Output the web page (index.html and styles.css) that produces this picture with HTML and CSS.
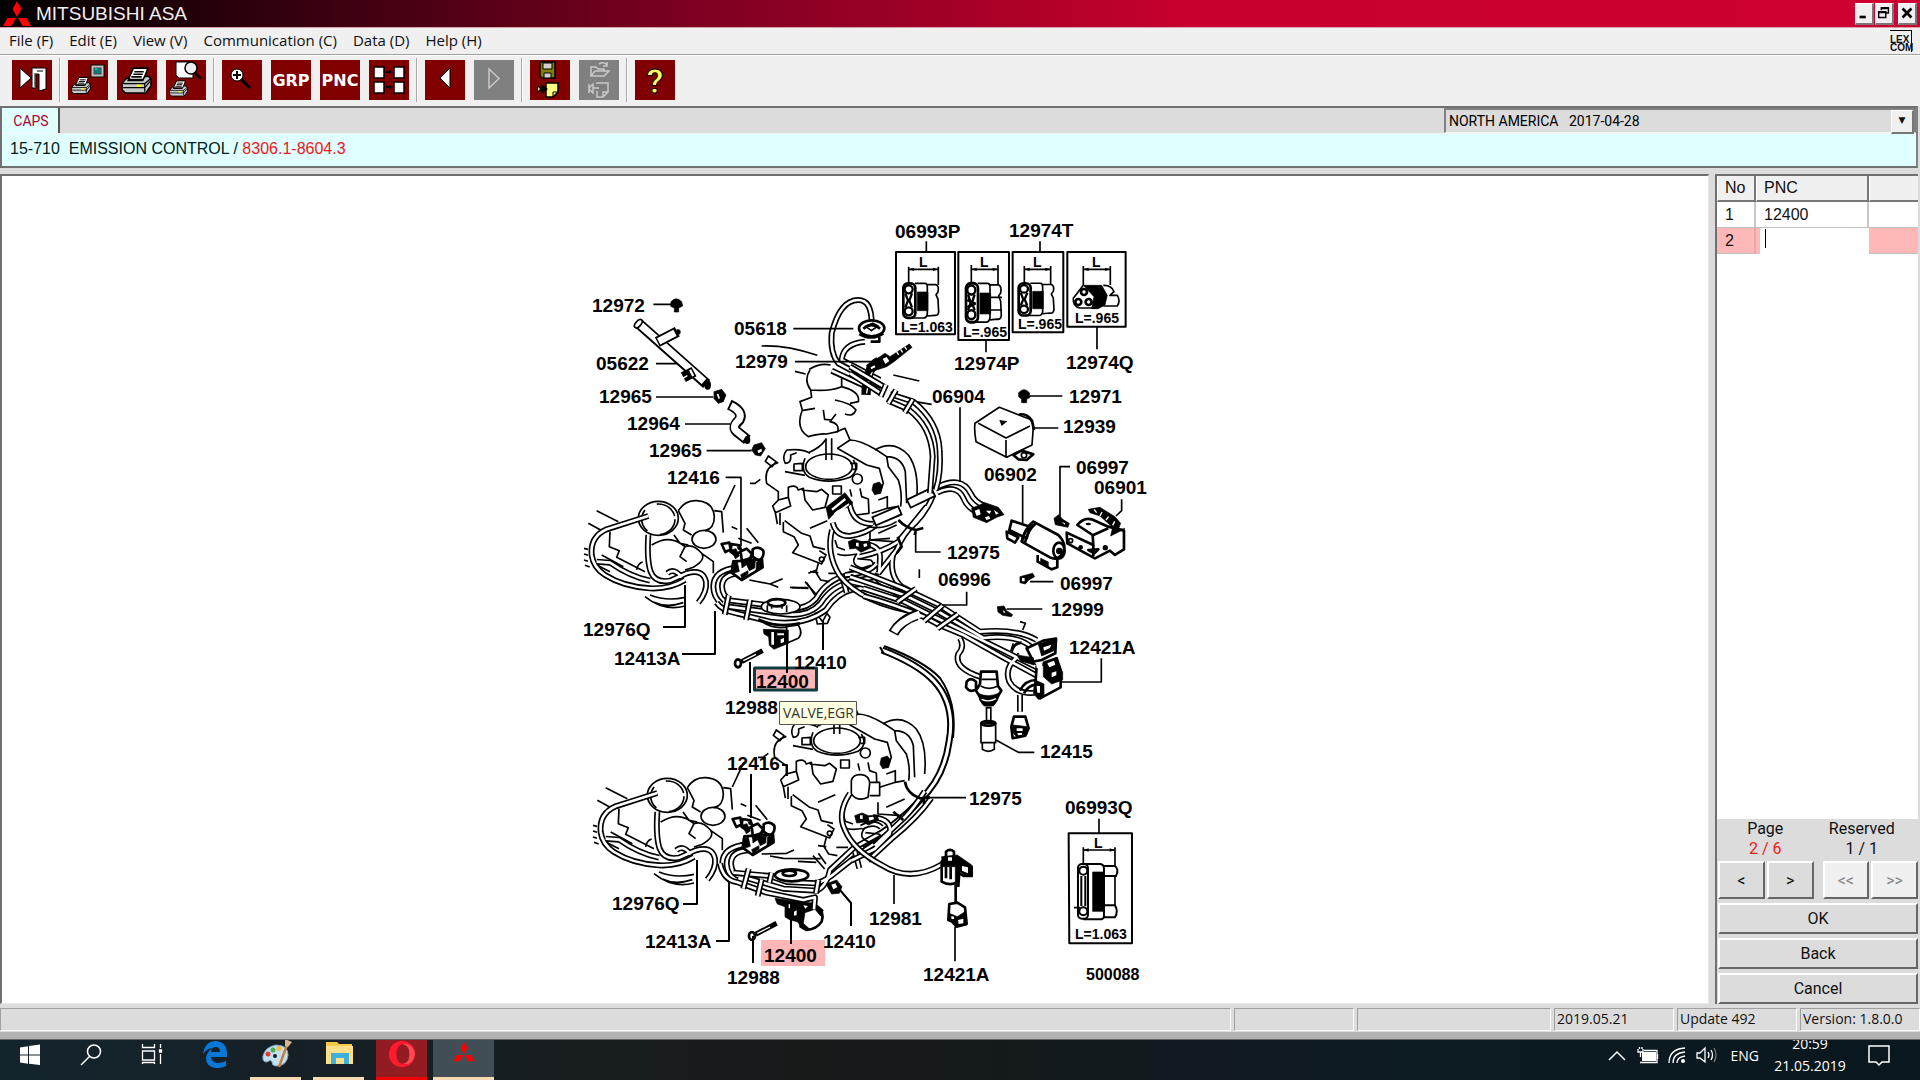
FILE: index.html
```html
<!DOCTYPE html>
<html lang="en">
<head>
  <meta charset="UTF-8">
  <meta name="viewport" content="width=device-width, initial-scale=1.0">
  <title>MITSUBISHI ASA</title>
  <link rel="stylesheet" href="styles.css">
</head>
<body>
  <svg class="sprites" width="0" height="0" aria-hidden="true">
    <symbol id="diamonds" viewBox="0 0 28 26">
      <path fill="#f00" d="M14 0 L18.500 8 L14 16 L9.500 8 Z M13 17 L8.500 25 H0 L4.500 17 Z M15 17 L19.500 25 H28 L23.500 17 Z"/>
    </symbol>
    <symbol id="printer" viewBox="0 0 30 26">
      <path fill="#fff" stroke="#000" stroke-width="1.500" d="M12 1 H26 L22 12 H7 Z"/>
      <path stroke="#000" stroke-width="1.500" d="M13 4.500 H22 M12 7 H21 M10 9.500 H20"/>
      <path fill="#c8c8c8" stroke="#000" stroke-width="1.500" d="M5 11 H8 L7 13 H21 L23 9 H27 L29 12 V18 L24 25 H4 L1 22 V16 Z"/>
      <path stroke="#000" stroke-width="1.200" fill="none" d="M1 16 H23 L29 11 M2 20 H23 L28 14 M23 16 V24"/>
      <path stroke="#ff0" stroke-width="2" d="M15 18 H20"/>
    </symbol>
  </svg>

  <header class="titlebar">
    <svg class="title-logo"><use href="#diamonds"/></svg>
    <h1>MITSUBISHI ASA</h1>
    <div class="window-buttons">
      <button aria-label="Minimize"><svg viewBox="0 0 18 18"><path d="M4 13.500 H11" stroke="#000" stroke-width="3"/></svg></button>
      <button aria-label="Restore"><svg viewBox="0 0 18 18"><path d="M6 6 V3 H14 V9 H11 M3 7.500 H11 V14 H3 Z M3 8.500 H11 M6 4 H14" fill="none" stroke="#000" stroke-width="1.600"/></svg></button>
      <button class="close" aria-label="Close"><svg viewBox="0 0 18 18"><path d="M4 4 L14 14 M14 4 L4 14" stroke="#000" stroke-width="3"/></svg></button>
    </div>
  </header>

  <nav class="menubar">
    <button>File (F)</button>
    <button>Edit (E)</button>
    <button>View (V)</button>
    <button>Communication (C)</button>
    <button>Data (D)</button>
    <button>Help (H)</button>
    <div class="lexcom">LEX<br>COM</div>
  </nav>

  <div class="toolbar">
    <button aria-label="Exit"><svg viewBox="0 0 40 40">
      <path d="M8 8 L19 18 L8 28 Z M20 8 H34 V29 L27 31 V14 H24 V28 H20 Z" fill="#fff" stroke="#000"/>
      <path d="M23 13 V27 M25 11 H31" stroke="#000"/></svg></button>
    <span class="sep"></span>
    <button aria-label="Print screen"><svg viewBox="0 0 40 40">
      <rect x="23" y="5" width="13" height="12" fill="#c0c0c0" stroke="#000"/><rect x="26" y="8" width="7" height="6" fill="#008080" stroke="#444"/><path d="M27 9 h2" stroke="#0ff"/>
      <use href="#printer" x="3" y="14" width="20" height="23"/></svg></button>
    <button aria-label="Print"><svg viewBox="0 0 40 40"><use href="#printer" x="4" y="6" width="31" height="29"/></svg></button>
    <button aria-label="Print preview"><svg viewBox="0 0 40 40">
      <path d="M10 2 H27 V18 H13 L10 15 Z" fill="#fff" stroke="#000"/>
      <circle cx="25" cy="8" r="6" fill="#eee" stroke="#000" stroke-width="1.500"/><path d="M29 13 L35 19" stroke="#000" stroke-width="2.500"/>
      <use href="#printer" x="3" y="19" width="19" height="19"/></svg></button>
    <span class="sep"></span>
    <button aria-label="Zoom in"><svg viewBox="0 0 40 40">
      <path d="M19 19 L28 28" stroke="#000" stroke-width="3"/><circle cx="15" cy="15" r="6" fill="#fff" stroke="#000"/><path d="M11 15 H19 M15 11 V19" stroke="#000" stroke-width="2"/></svg></button>
    <button class="word">GRP</button>
    <button class="word">PNC</button>
    <button aria-label="Illustration links"><svg viewBox="0 0 40 40">
      <path d="M5 7 H15 V18 H5 Z M25 7 H35 V18 H25 Z M5 22 H15 V33 H5 Z M25 22 H35 V33 H25 Z" fill="#fff" stroke="#000" stroke-width="1.500"/>
      <path d="M17 12 H22 M17 27 H22" stroke="#000" stroke-width="2"/><path d="M20 9 L23 12 L20 15 Z M20 24 L23 27 L20 30 Z"/></svg></button>
    <span class="sep"></span>
    <button aria-label="Previous"><svg viewBox="0 0 40 40"><path d="M25 8 V28 L15 18 Z" fill="#fff" stroke="#000"/></svg></button>
    <button aria-label="Next" disabled><svg viewBox="0 0 40 40"><path d="M15 9 V28 L25 18.500 Z" fill="none" stroke="#c8c8c8" stroke-width="1.500"/></svg></button>
    <span class="sep"></span>
    <button aria-label="Save and send"><svg viewBox="0 0 40 40">
      <path d="M10 2 H25 V18 H12 L10 16 Z" fill="#808000" stroke="#000" stroke-width="1.500"/><path d="M13 3 H22 V9 H13 Z M14 13 H21 V18 H14 Z" fill="#d0d0d0" stroke="#000"/>
      <path d="M16 23 H28 V32 L23 37 H16 Z" fill="#ffff80" stroke="#000" stroke-width="1.500"/><path d="M28 32 H23 V37" fill="none" stroke="#000"/>
      <path d="M7 24 L11 28 V24 L18 29 L11 34 V30 L7 34 Z" fill="#000"/><path d="M8 27 L10 29 L8 31 Z" fill="#ffff80"/></svg></button>
    <button aria-label="Open and send" disabled><svg viewBox="0 0 40 40" fill="none" stroke="#c8c8c8" stroke-width="1.500">
      <path d="M12 16 V7 H17 L19 9 H25 V11 M12 16 L16 11 H30 L25 16 Z M20 4 Q25 1 28 5 M28 2 V6 H24"/>
      <path d="M17 23 H29 V32 L24 37 H18 V31 M29 32 H24 V37 M10 24 V33 M10 28 L14 24 V33 L10 29 M14 28 H20"/></svg></button>
    <span class="sep"></span>
    <button aria-label="Help"><svg viewBox="0 0 40 40"><text x="20" y="33" class="help-mark">?</text></svg></button>
  </div>

  <section class="context">
    <div class="tabstrip">
      <button class="tab">CAPS</button>
      <div class="region">
        <select aria-label="Region"><option>NORTH AMERICA &nbsp; 2017-04-28</option></select>
      </div>
    </div>
    <p class="path">15-710 &nbsp;EMISSION CONTROL / <span class="red">8306.1-8604.3</span></p>
  </section>

  <main class="workspace">
    <div class="illustration">
      <svg class="drawing" viewBox="545 190 620 800" role="img" aria-label="Emission control parts">
        <defs>
          <!-- vacuum reservoir and valve side, shared by both assemblies -->
          <g id="bank-lines">
            <path d="M80 92 L145 125 M55 130 L92 150 M120 155 L118 200 L148 212 L140 232 L225 275 M245 195 Q300 160 345 200 L330 230 L350 245 M345 200 Q370 190 395 220 Q408 240 370 262 L345 270 M312 165 L330 190 L355 195 M395 220 L430 245 L430 280 M200 270 Q203 250 218 246"/>
            <path d="M325 92 Q345 60 380 62 Q430 65 433 110 Q433 145 405 152 M325 92 L345 130 L340 150 L365 165 M433 92 L455 95 L460 158 M460 90 L495 15 M485 140 L502 148 M530 145 L565 188 M505 175 L545 190"/>
            <path d="M42 205 l12 3 M42 222 l12 4 M42 240 l12 4 M45 256 l14 5 M225 350 Q280 395 345 378 M240 345 Q290 365 345 352 M250 366 Q290 385 340 368 M95 225 L160 260 M70 250 L120 275"/>
            <ellipse cx="265" cy="115" rx="60" ry="51"/>
            <ellipse cx="265" cy="118" rx="50" ry="46" stroke-dasharray="70 40"/>
            <ellipse cx="402" cy="178" rx="36" ry="27"/>
          </g>
          <g id="bank-hoses">
            <path d="M235 108 L110 148 Q60 170 65 225 Q70 262 105 285 Q160 320 240 325 Q300 328 345 300"/>
            <path d="M235 165 Q230 240 242 275 Q255 310 300 302 L350 280 Q400 265 408 305 Q412 335 385 368"/>
            <path d="M80 245 L120 248 Q180 290 240 302 M292 280 Q312 262 335 292"/>
            <path d="M505 262 Q430 270 430 320 Q430 350 455 372 M515 280 Q456 280 456 320 Q458 350 480 358"/>
          </g>
          <g id="switch-valve">
            <path class="line white thick" d="M455 192 L478 188 L482 208 L466 216 Z M484 192 L508 196 L514 212 L498 226 L482 216 Z M512 214 L530 206 L546 222 L538 240 L516 246 Z M548 208 Q566 196 580 212 Q584 232 566 242 L548 230 Z M490 244 L576 238 L578 262 L515 300 L485 278 Z"/>
            <path class="solid" d="M484 210 l14 -4 l10 22 l-12 8 Z M514 240 l26 -8 l16 12 l-2 20 l-16 8 l-8 -18 l-14 10 Z M486 250 l16 -4 l6 28 l-18 6 Z M560 246 l16 -4 l0 20 l-18 8 Z M512 284 l22 -12 l0 10 l-18 14 Z M502 200 l10 2 l2 8 l-10 -2 Z"/>
          </g>
          <!-- carburettor body -->
          <g id="engine">
            <ellipse cx="237" cy="200" rx="70" ry="38"/>
            <path d="M165 175 Q150 215 178 232 Q235 255 300 232 Q330 212 310 180 M300 190 h20 v18 h-12 M228 115 V180 M245 115 V180"/>
            <path d="M260 95 L285 85 L300 120 L262 145 M228 118 Q210 145 175 158 M110 150 Q95 170 106 190 Q125 190 122 165 L140 158 M110 150 Q160 145 180 160 M132 192 v20 h25 v-22 Z M105 215 L165 226"/>
            <path d="M55 168 L78 185 L66 200 L46 184 Z M85 187 Q40 200 50 250 L85 275 V300 M0 250 l15 0 l16 -12"/>
            <path d="M85 300 L115 292 L122 318 L76 338 L68 318 Z M76 338 L82 372 M90 338 V375 M100 366 V395 L132 410 L145 435 L128 458 L215 492 L228 465 L208 452 M115 292 V262 Q140 252 145 270 L160 265 L165 300 L188 330 L225 322 L235 285 L215 268 L200 275 L155 270 M104 362 L155 400 L180 408 L190 440 L225 448"/>
            <path d="M300 120 Q330 120 380 150 L410 170 L415 200 L445 240 Q458 280 452 320 M375 150 Q430 118 475 165 Q508 210 500 300 M410 170 Q455 170 466 215 L470 310 M262 145 L350 195 L388 205 L400 250 L388 282"/>
            <path d="M248 258 h26 v24 h-26 Z M300 268 L305 290 M330 265 L335 290 L355 297 L357 340 L318 345 M385 300 L412 290 V325 L440 320 M365 340 L412 325 M180 385 L232 362 M360 385 V420 L430 425 M385 400 L440 375 M255 420 L262 442 L285 450"/>
            <path d="M262 462 Q280 470 320 462 Q295 495 340 505 Q385 500 362 480 L322 476 M205 490 L198 518 L212 540 L238 545 M180 515 L205 518 M235 520 H270 M165 545 L200 585 M120 562 L175 565"/>
            <circle cx="322" cy="237" r="15"/>
            <circle cx="215" cy="478" r="7"/>
            <path class="solid" d="M370 252 l18 -6 l10 12 l-6 22 l-18 4 l-8 -14 Z"/>
          </g>
          <g id="engine-block">
            <path class="solid" d="M228 322 L285 278 L308 308 L292 322 L262 330 L236 358 Z M295 425 l18 -8 l22 8 l24 -2 l4 20 l-30 14 l-16 -12 l-18 2 Z"/>
            <path class="knock" d="M244 326 l40 -32 l4 6 l-40 32 Z M252 340 l44 -30 l2 5 l-42 30 Z M318 428 l8 0 l0 12 l-8 -2 Z M340 432 l10 -2 l2 8 l-10 4 Z"/>
          </g>
          <g id="connector">
            <path d="M35 0 H65 Q72 0 72 12 V92 Q70 104 60 104 H22 M72 4 H98 Q108 8 104 26 L98 34 L104 48 L106 86 Q104 98 94 96 L72 98"/>
            <rect x="0" y="0" width="36" height="104" rx="14" stroke-width="8"/>
            <circle cx="16" cy="18" r="12" stroke-width="7"/>
            <circle cx="16" cy="84" r="12" stroke-width="7"/>
            <path d="M6 30 L14 52 L6 72 M26 30 L18 52 L26 72" stroke-width="7"/>
            <path class="solid" d="M42 26 H74 V82 H42 Z"/>
          </g>
        </defs>

        <!-- upper bank -->
        <g transform="translate(570 480) scale(.3333)">
          <use href="#bank-lines" class="line"/>
          <use href="#bank-hoses" class="hose"/><use href="#bank-hoses" class="core"/>
          <use href="#switch-valve"/>
          <g class="line">
            <path d="M538 300 L600 312 L638 296 M600 312 L625 322 M665 323 H715 M710 308 L735 345 M740 270 L715 280 M562 415 Q620 465 692 425"/>
            <path fill="#fff" d="M650 440 L685 435 Q700 460 685 475 L650 490 Z M735 400 L765 392 L780 412 L772 430 L742 432 Z"/>
            <path d="M745 408 L758 425 L770 402"/>
          </g>
          <path class="solid" d="M580 448 L655 450 L655 490 L612 508 L598 496 L596 470 L582 462 Z"/>
          <path class="knock" d="M604 456 h8 v38 h-8 Z M632 478 l10 -4 v12 l-10 4 Z M622 460 h20 v6 h-20 Z"/>
          <g id="upper-run" class="hose">
            <path d="M470 360 L630 380 Q700 398 738 356 Q770 300 830 286 L905 262"/>
            <path d="M462 378 L640 402 Q715 412 752 370 Q785 318 845 305 L930 288"/>
            <path d="M440 368 Q455 392 500 400 L600 425 Q700 440 768 390 Q800 340 850 328 L930 318"/>
          </g>
          <use href="#upper-run" class="core"/>
          <ellipse class="line white" cx="632" cy="380" rx="58" ry="22"/>
          <ellipse class="line thick" cx="620" cy="368" rx="26" ry="11"/>
          <path class="line" d="M592 376 v20 M650 376 v20 M605 372 v14 M636 372 v14"/>
          <path class="line thick" d="M565 418 Q620 445 690 430"/>
          <g id="clips-a" class="hose"><path d="M476 346 L464 404 M540 360 L528 420 M815 284 L830 338"/></g>
          <use href="#clips-a" class="core"/>
          <g id="bolt"><path class="line bolt" d="M515 545 L578 512"/><path class="gleam" d="M520 542 L558 523"/><ellipse class="line white thick" cx="504" cy="550" rx="9" ry="12"/></g>
        </g>

        <!-- intake above the carburettor -->
        <g class="line" transform="translate(570 210) scale(.3333)">
          <path d="M720 480 Q700 510 722 540 L725 562 L690 575 L697 600 Q675 655 715 680 Q750 670 770 672 L803 665 Q810 640 780 635 L798 612 M760 600 L764 628 L785 630 M675 484 L707 492 M718 478 Q750 458 782 465 M722 540 Q780 545 815 530 M815 505 V530 M795 570 Q845 580 858 600 Q850 622 825 612 M815 530 Q872 545 865 575 L840 580 M695 602 L735 595 M575 408 Q650 405 742 436"/>
        </g>

        <!-- upper carburettor -->
        <g transform="translate(750 400) scale(.3333)">
          <use href="#engine" class="line"/>
          <g id="engine-hoses" class="hose">
            <path d="M298 305 Q305 372 370 372 M248 368 Q258 410 300 408 Q350 400 378 375 M550 285 Q530 335 495 370 Q460 400 440 450 L385 520 M530 320 L445 425 Q400 455 330 470"/>
            <path d="M430 460 Q415 525 455 560 L495 580 M330 432 Q392 430 390 475 L388 515 M285 525 Q360 520 380 490 M370 520 Q380 550 470 585 M300 545 Q380 560 450 600"/>
          </g>
          <use href="#engine-hoses" class="core"/>
          <g id="cross-hose" class="hose"><path d="M246 390 Q228 460 268 525 Q330 610 510 638"/></g>
          <use href="#cross-hose" class="core"/>
          <use href="#engine-block"/>
          <path class="pipe" d="M370 365 L452 330 M474 312 L552 275"/><path class="pipe-core" d="M375 363 L447 332 M479 310 L547 277"/>
          <path class="line thick" d="M445 360 Q470 385 498 390 L520 384 M498 390 L494 405 M443 410 L455 440 L440 460"/>
          <g id="branch" class="hose"><path d="M560 262 Q635 225 662 280 Q674 306 704 318 M562 278 Q620 250 640 294 Q652 325 685 338"/></g>
          <use href="#branch" class="core"/>
        </g>

        <!-- upper loop and main hose -->
        <g transform="translate(570 210) scale(.3333)">
          <g id="loop" class="hose">
            <path d="M905 340 Q905 270 865 270 Q810 270 785 370 Q780 430 805 460 L935 530 M885 395 Q820 400 815 450 L930 510 M785 482 L890 530"/>
          </g>
          <use href="#loop" class="core"/>
          <path class="line clamp" d="M925 455 Q890 470 888 555"/><path class="gleam" d="M915 470 Q896 500 890 550"/>
          <path class="line" d="M970 495 L1048 513 M1035 575 L1085 583"/>
        </g>
        <g transform="translate(870 210) scale(.3333)">
          <g id="main-hose" class="hose">
            <path d="M-60 470 L45 532 M-60 490 L35 552 M60 552 L130 575 Q205 635 209 720 Q214 790 197 840 M55 572 L115 598 Q184 650 188 740 L180 850"/>
          </g>
          <use href="#main-hose" class="core"/>
          <g id="clips-d" class="hose"><path d="M128 568 L104 608 M78 540 L55 580 M48 524 L32 560"/></g><use href="#clips-d" class="core"/>
          <ellipse class="line white thick" cx="5" cy="355" rx="38" ry="24"/><path class="line thick" d="M-20 356 Q5 334 30 356 M-32 372 Q5 394 40 370 M2 395 h26 v-14"/>
          <path class="line" d="M-12 350 L8 340 L24 348 L4 362 Z"/>
          <path class="solid" d="M-10 465 L30 440 L45 430 L60 440 L118 402 L126 412 L72 455 L50 470 L20 480 L-8 492 Z"/><path class="knock" d="M38 446 l12 -5 l8 12 l-12 9 Z M2 472 l12 -6 l2 6 l-12 6 Z"/>
          <path class="gleam" d="M80 425 l6 10 M92 418 l6 9 M104 410 l6 9"/>
        </g>

        <!-- pipe 05622 with brackets and hose 12964 -->
        <g transform="translate(570 210) scale(.3333)">
          <path class="pipe" d="M205 340 L410 522"/><path class="pipe-core" d="M210 344 L402 514"/>
          <ellipse class="line white" cx="205" cy="341" rx="8" ry="15" transform="rotate(40 205 341)"/>
          <path class="pipe" d="M262 396 L322 365"/><path class="pipe-core" d="M266 394 L315 369"/><circle class="dot" cx="324" cy="366" r="8"/>
          <path class="pipe" d="M340 502 L372 485"/><path class="pipe-core" d="M362 490 L368 487"/><path class="gleam" d="M338 505 l14 -8"/>
          <ellipse class="dot" cx="413" cy="525" rx="10" ry="14"/>
          <path class="pipe" d="M478 584 Q522 604 508 630 Q486 650 500 664 L532 690"/><path class="pipe-core" d="M483 587 Q520 605 508 629 Q484 650 499 663 L525 684"/><ellipse class="dot" cx="532" cy="690" rx="9" ry="12"/>
          <path class="solid" d="M432 545 L455 538 L468 555 L460 575 L445 580 L432 566 Z M552 705 L575 698 L586 716 L572 738 L556 735 L545 720 Z"/>
          <path class="knock" d="M440 553 l6 14 l4 -2 l-5 -14 Z M562 722 l12 -6 l2 8 l-10 6 Z"/>
          <path class="solid" d="M303 275 Q318 258 335 275 L338 288 L326 294 V306 H313 V294 L302 289 Z"/>
          <g class="lead"><path d="M250 283 H303 M258 461 H320 M258 561 H430 M345 642 H480 M410 722 H545 M670 356 H850 M675 455 H905 M467 802 H513 V1008"/></g>
        </g>

        <!-- connector boxes -->
        <g transform="translate(870 210) scale(.3333)">
          <g class="line frame"><path d="M78 126 H255 V373 H78 Z M265 126 H417 V390 H265 Z M428 126 H580 V367 H428 Z M592 126 H767 V350 H592 Z"/></g>
          <g class="lead"><path d="M169 94 V126 M510 94 V126 M348 390 V427 M681 350 V418 M116 170 V225 M205 170 V225 M116 178 H205 M304 165 V225 M384 165 V225 M304 178 H384 M463 168 V225 M542 168 V225 M463 178 H542 M640 168 V225 M721 168 V225 M640 178 H721"/></g>
          <path class="dot" d="M116 178 l16 -5 v10 Z M205 178 l-16 -5 v10 Z M304 178 l16 -5 v10 Z M384 178 l-16 -5 v10 Z M463 178 l16 -5 v10 Z M542 178 l-16 -5 v10 Z M640 178 l16 -5 v10 Z M721 178 l-16 -5 v10 Z"/>
          <use href="#connector" class="line" x="100" y="220"/>
          <use href="#connector" class="line" transform="translate(288 220) scale(1 1.120)"/>
          <path class="line thick" d="M292 270 l25 12 M292 292 l25 -12"/><path class="line" d="M360 262 h36 M360 300 h36"/>
          <use href="#connector" class="line" transform="translate(446 220) scale(1 .930)"/>
          <path class="line white" d="M640 226 L610 265 Q608 290 630 294 H680 M700 226 Q725 225 732 245 L720 256 H742 Q752 272 742 288 H700"/>
          <path class="solid" d="M640 226 H695 L712 256 L705 285 L685 296 H665 L672 260 Z"/>
          <g class="line thick"><circle cx="642" cy="246" r="9"/><circle cx="625" cy="276" r="9"/><circle cx="656" cy="276" r="9"/></g>
          <!-- bolt 12971 and control unit 12939 -->
          <path class="solid" d="M446 548 Q462 530 478 548 L480 562 L470 568 V578 H455 V568 L446 560 Z"/>
          <path class="line white" d="M388 592 L480 628 Q490 640 490 652 L486 705 L410 742 L318 695 Q312 660 315 640 Z"/>
          <path class="line" d="M325 640 L408 684 L480 648 M408 690 V740"/>
          <path class="line thick" d="M447 614 Q470 608 486 632 L492 660 M430 735 L455 722 L490 733 L470 750 L445 748 Z"/>
          <path class="dot" d="M388 630 L412 634 L395 648 Z"/><circle class="line" cx="462" cy="736" r="8"/>
          <g class="lead"><path d="M480 558 H577 M492 654 H565 M270 592 V815 M600 770 H570 V920 M458 825 V945"/></g>
        </g>

        <!-- right harness -->
        <g transform="translate(870 480) scale(.3333)">
          <g id="harness" class="hose">
            <path d="M-60 262 L100 325 L205 374 L330 455 Q440 445 500 480"/>
            <path d="M-60 290 L100 344 L205 395 L340 474 Q440 462 485 502 L500 540"/>
            <path d="M-20 325 L100 364 L200 414 L400 512 L520 572"/>
            <path d="M-20 348 Q70 372 165 412 L210 436 L280 465 L395 530 L510 592"/>
            <path d="M270 475 Q285 500 265 522 Q250 565 335 592 M450 525 Q400 560 418 605 Q440 645 500 638 M450 645 V695"/>
          </g>
          <use href="#harness" class="core"/>
          <g id="clips-b" class="hose"><path d="M138 326 L82 366 M218 376 L162 424 M264 402 L202 446"/></g><use href="#clips-b" class="core"/>
          <path class="pipe" d="M140 405 Q90 422 70 460"/><path class="pipe-core" d="M150 402 Q90 424 72 456"/>
          <path class="line" d="M450 425 L466 430 L458 450 M430 490 L422 515 M148 268 v26 M-5 180 L60 175 M-5 140 Q40 150 80 125"/>
          <!-- plug at the end of 06904 -->
          <path class="solid" d="M305 85 L345 68 L385 82 L402 104 L380 112 L350 128 L310 112 Z"/><path class="knock" d="M314 92 l14 -5 l4 16 l-12 5 Z M348 92 l16 0 l-6 10 Z M345 112 l12 -4 l4 8 l-12 4 Z M372 90 l14 10 l-8 4 Z"/>
          <!-- motor 06902 -->
          <path class="line white thick" d="M425 122 L480 140 L470 175 L418 150 Z M490 125 L565 165 Q590 190 580 215 Q565 245 540 232 L455 185 Q465 145 490 125 Z M410 155 L445 172 L435 188 L412 175 Z M503 225 V245 L545 268 L562 262 V238"/>
          <path class="line thick" d="M500 128 Q472 150 464 192 M486 130 Q462 150 456 184"/>
          <ellipse class="line thick" cx="567" cy="212" rx="17" ry="24"/><circle class="dot" cx="568" cy="213" r="10"/>
          <path class="solid" d="M512 235 L535 246 L535 262 L512 248 Z"/>
          <path class="solid" d="M552 115 L566 104 L578 118 L598 130 L594 142 L574 138 L556 134 Z M450 290 L468 285 L488 280 L494 290 L476 300 L466 312 L450 308 Z M382 380 L402 378 L410 392 L428 404 L424 410 L398 406 L384 396 Z"/>
          <path class="knock" d="M456 294 l8 0 l0 10 l-8 0 Z M576 126 l10 4 l-2 4 Z M398 390 l8 6 l-4 4 Z"/>
          <!-- bracket 06901 -->
          <path class="line white thick" d="M590 158 L670 195 L668 165 L622 135 Q640 112 665 118 L715 140 L762 152 V208 L735 225 L720 212 L675 235 L592 190 Z"/>
          <path class="line thick" d="M670 165 L715 145 M670 195 V228 M655 210 l30 -2 l-12 12 Z"/>
          <path class="solid" d="M655 88 L690 82 L735 110 L752 130 L745 148 L765 146 L722 168 L728 142 L690 108 L660 98 Z"/>
          <path class="gleam" d="M672 88 l8 10 M696 96 l-6 12 M716 110 l-8 10 M734 124 l-6 12"/>
          <circle class="dot" cx="632" cy="202" r="7"/><circle class="dot" cx="706" cy="203" r="8"/><circle class="line" cx="602" cy="182" r="6"/><ellipse class="dot" cx="655" cy="132" rx="8" ry="4"/>
          <!-- solenoid block 12421A -->
          <path class="line white thick" d="M470 505 L520 482 L558 476 L556 520 L515 540 L490 545 Z M425 515 Q430 490 455 488 M500 560 L560 535 L572 570 V622 L510 655 L495 630 Z"/>
          <path class="solid" d="M505 492 L560 474 V484 L552 512 L515 528 Z M520 545 L562 532 L570 566 L578 575 V600 L545 612 L520 590 Z M495 600 L522 612 V650 L505 658 L490 640 Z M440 525 l50 8 l2 22 l-40 -12 Z"/>
          <path class="knock" d="M520 502 l24 -8 l-4 10 l-18 8 Z M532 550 l20 -8 l4 12 l-18 8 Z M545 578 l14 -4 v12 l-14 6 Z M500 618 h10 v20 h-8 Z M528 618 l14 -6 v18 l-14 6 Z M498 548 l20 2 l-4 14 l-14 0 Z"/>
          <path class="line thick" d="M450 632 Q465 600 500 600 M462 640 Q475 616 498 614"/>
          <path class="line white thick" d="M432 710 h34 l10 35 l-10 22 l-38 8 l-4 -35 Z"/><path class="solid" d="M428 735 L472 740 V762 L440 770 L428 758 Z"/><path class="knock" d="M440 745 h18 v8 h-18 Z M442 760 l14 -2 v6 l-12 2 Z"/>
          <!-- sensor 12415 -->
          <path class="line white thick" d="M333 575 H380 L384 618 L394 632 L382 652 L372 670 H340 L328 648 L318 632 L330 612 Z M290 605 Q302 590 318 605 V628 Q300 640 288 622 Z"/>
          <path class="solid" d="M324 640 Q355 655 390 638 L382 662 L370 678 H342 L330 662 Z"/><path class="gleam" d="M335 658 Q356 668 378 656"/>
          <path class="line" d="M335 598 H380 M332 618 Q356 632 384 618"/>
          <path class="hose" d="M356 680 V730"/><path class="core" d="M356 686 V724"/>
          <path class="line white" d="M333 730 H377 V788 H333 Z M337 788 H373 V808 Q355 820 337 808 Z"/><ellipse class="line thick" cx="355" cy="730" rx="21" ry="7"/>
          <g class="lead"><path d="M137 155 V216 H212 M290 335 V375 H215 M480 305 H550 M410 387 H517 M694 535 V606 H575 M378 780 L445 817 H493 M755 58 V92 L738 108"/></g>
        </g>

        <!-- hose to the lower assembly -->
        <g id="return-hose" class="hose full"><path d="M882 650 Q918 664 934 681 Q956 705 949 742 Q944 778 920 800 Q898 825 862 845"/></g>
        <use href="#return-hose" class="core full"/>
        <path class="line full" d="M884 646 Q924 661 940 678 Q957 702 953 738 M880 647 L884 654"/>

        <!-- lower bank -->
        <g transform="translate(579 757) scale(.3333)">
          <use href="#bank-lines" class="line"/>
          <use href="#bank-hoses" class="hose"/><use href="#bank-hoses" class="core"/>
          <use href="#switch-valve" x="6" y="-6"/>
        </g>
        <g transform="translate(570 720) scale(.3333)">
          <path class="line" d="M575 402 L650 400 L672 390 M600 408 L640 415 L752 416 M745 400 L768 432"/>
          <path class="line white thick" d="M620 540 L650 560 V590 L690 598 M690 590 Q700 565 740 560 Q765 575 755 605 Q740 628 710 630 L692 620 Z"/>
          <path class="solid" d="M615 535 L690 545 L735 550 L760 570 L752 588 L735 568 L705 578 L700 610 L722 630 L700 628 L682 605 L660 600 L645 590 L645 560 L622 552 Z"/>
          <path class="knock" d="M656 552 l10 2 v12 l-10 -2 Z M672 575 l8 -4 v14 l-8 2 Z M700 556 l14 2 l-8 8 Z"/>
          <g id="lower-run" class="hose">
            <path d="M490 458 L600 468 L650 486 L740 490 Q775 478 800 455 L870 400 L930 360"/>
            <path d="M450 430 Q460 480 500 486 L590 518 L700 540 L735 532 L732 568"/>
            <path d="M530 474 L640 506 L740 512 Q770 500 780 450 L850 385 L930 340"/>
          </g>
          <use href="#lower-run" class="core"/>
          <ellipse class="line white thick" cx="665" cy="466" rx="50" ry="18"/><ellipse class="line thick" cx="658" cy="460" rx="20" ry="8"/>
          <g id="clips-c" class="hose"><path d="M536 446 L520 506 M575 478 L563 528 M605 458 L598 488 M855 395 L868 445 M745 480 L738 520"/></g><use href="#clips-c" class="core"/>
          <path class="solid" d="M768 492 L800 480 L816 500 L808 520 L785 522 Z"/><path class="knock" d="M784 494 l12 -4 l6 12 l-12 6 Z"/>
          <use href="#bolt" x="42" y="98"/>
        </g>

        <!-- lower carburettor -->
        <g transform="translate(758 674) scale(.3333)">
          <use href="#engine" class="line"/>
          <g id="lower-hoses" class="hose">
            <path d="M345 430 Q405 435 395 480 L350 525 L280 560 M500 352 Q470 400 440 430 L350 515 M520 372 Q480 430 400 495 L330 560 M310 460 Q350 440 370 460"/>
          </g>
          <use href="#lower-hoses" class="core"/>
          <path class="line white" d="M280 320 Q285 300 310 302 Q335 305 335 330 L330 370 Q300 385 280 360 Z M335 325 H365 V365 H335"/>
          <path class="solid" d="M290 425 l22 -8 l20 8 l26 -2 l4 16 l-30 14 l-16 -8 l-20 2 Z"/><path class="knock" d="M306 424 l8 0 l0 12 l-8 -2 Z M332 430 l14 -2 l2 8 l-14 4 Z"/>
        </g>
        <g transform="translate(570 720) scale(.3333)">
          <g id="hose-12981" class="hose"><path d="M840 220 Q800 280 825 330 Q850 390 935 435 Q1020 490 1118 432"/></g>
          <use href="#hose-12981" class="core"/>
        </g>
        <g transform="translate(870 720) scale(.3333)">
          <path class="line thick" d="M105 185 Q110 220 150 235 L180 232 M162 240 v12 M70 275 L100 300"/>
          <path class="line white thick" d="M228 395 Q240 385 252 395 V410 L268 425 L266 485 Q240 500 215 485 V425 L228 410 Z M268 425 L305 440 V468 H282 L268 460"/>
          <path class="solid" d="M215 410 L262 405 L305 435 L308 470 L290 468 L270 455 L268 500 L256 500 V440 L218 440 Z"/><path class="knock" d="M234 412 h12 v10 h-12 Z M276 438 l18 4 v18 l-18 -8 Z"/>
          <path class="line thick" d="M228 440 V475 M242 440 V478 M257 495 V560"/>
          <path class="line white thick" d="M238 552 L262 548 L285 562 L290 612 L260 620 L246 605 L235 600 Z"/><path class="solid" d="M238 580 L262 590 L285 575 L290 615 L262 620 L248 602 L236 600 Z"/><path class="knock" d="M264 600 l16 -4 v14 l-14 2 Z M244 588 l8 2 v8 l-8 -2 Z"/>
          <g class="line frame"><path d="M596 340 H786 V670 H598 Z"/></g>
          <g class="lead"><path d="M687 296 V340 M640 382 V432 M735 382 V440 M640 390 H735 M178 233 H288 M72 465 V552 M255 620 V724 M612 563 H630 M735 470 V555"/></g>
          <path class="dot" d="M640 390 l16 -5 v10 Z M735 390 l-16 -5 v10 Z"/>
          <g class="line frame"><path d="M640 432 H692 Q702 434 702 446 V590 Q700 598 690 598 H640 M702 438 H735 Q748 448 738 468 H702 M702 556 H735 Q746 575 735 592 H702"/><rect x="624" y="432" width="30" height="164" rx="12"/><circle cx="640" cy="452" r="12"/><circle cx="640" cy="574" r="12"/><path d="M634 468 V558 M646 468 V558"/></g>
          <path class="solid" d="M668 456 H700 V574 H668 Z"/>
        </g>

        <!-- bank leaders -->
        <g class="lead full">
          <path d="M663 627 H685 V585 M682 654 H715 V611 M823 650 V621 M750 693 V662 M787 673 V637"/>
          <path d="M751 774 V818 M683 904 H697 V860 M716 941 H729 V883 M851 926 V903 L840 890 M753 963 V936 M782 765 H787 V776"/>
        </g>

        <rect x="754.500" y="668" width="62" height="22" class="hot selected"/>
        <rect x="761" y="940" width="64" height="26" class="hot"/>
        <path class="lead full" d="M787 667 V673 M791 900 V944"/>

        <g class="callout">
          <text x="592" y="312">12972</text><text x="596" y="370">05622</text><text x="599" y="403">12965</text>
          <text x="627" y="430">12964</text><text x="649" y="457">12965</text><text x="667" y="484">12416</text>
          <text x="734" y="335">05618</text><text x="735" y="368">12979</text>
          <text x="895" y="238">06993P</text><text x="1009" y="237">12974T</text><text x="954" y="370">12974P</text><text x="1066" y="369">12974Q</text>
          <text x="932" y="403">06904</text><text x="1069" y="403">12971</text><text x="1063" y="433">12939</text>
          <text x="984" y="481">06902</text><text x="1076" y="474">06997</text><text x="1094" y="494">06901</text>
          <text x="947" y="559">12975</text><text x="938" y="586">06996</text><text x="1060" y="590">06997</text>
          <text x="1051" y="616">12999</text><text x="1069" y="654">12421A</text><text x="1040" y="758">12415</text>
          <text x="583" y="636">12976Q</text><text x="614" y="665">12413A</text><text x="794" y="669">12410</text>
          <text x="756" y="688">12400</text><text x="725" y="714">12988</text>
          <text x="727" y="770">12416</text><text x="612" y="910">12976Q</text><text x="645" y="948">12413A</text>
          <text x="764" y="962">12400</text><text x="823" y="948">12410</text><text x="727" y="984">12988</text>
          <text x="869" y="925">12981</text><text x="923" y="981">12421A</text><text x="969" y="805">12975</text>
          <text x="1065" y="814">06993Q</text>
        </g>
        <g class="callout small">
          <text x="901" y="332">L=1.063</text><text x="963" y="337">L=.965</text><text x="1018" y="329">L=.965</text><text x="1075" y="323">L=.965</text><text x="1075" y="939">L=1.063</text>
          <text x="919" y="267">L</text><text x="980" y="267">L</text><text x="1033" y="267">L</text><text x="1092" y="267">L</text><text x="1094" y="848">L</text>
        </g>
        <text x="1086" y="980" class="sheet">500088</text>

        <rect x="779.500" y="701.500" width="77" height="23" class="tip"/>
        <text x="783" y="718" class="tip-text">VALVE,EGR</text>
      </svg>
    </div>

    <aside class="side">
      <div class="grid-area">
        <table>
          <thead><tr><th class="no">No</th><th class="pnc">PNC</th><th></th></tr></thead>
          <tbody>
            <tr><td>1</td><td>12400</td><td></td></tr>
            <tr class="current"><td>2</td><td class="edit"><input type="text" aria-label="PNC"><span class="caret"></span></td><td></td></tr>
          </tbody>
        </table>
      </div>
      <div class="counters">
        <div>Page<br><span class="red">2 / 6</span></div>
        <div>Reserved<br>1 / 1</div>
      </div>
      <div class="pager">
        <button>&lt;</button>
        <button>&gt;</button>
        <button class="second" disabled>&lt;&lt;</button>
        <button disabled>&gt;&gt;</button>
      </div>
      <div class="actions">
        <button>OK</button>
        <button>Back</button>
        <button>Cancel</button>
      </div>
    </aside>
  </main>

  <footer class="status">
    <span class="message"></span>
    <span></span>
    <span class="progress"></span>
    <span>2019.05.21</span>
    <span>Update 492</span>
    <span>Version: 1.8.0.0</span>
  </footer>

  <div class="taskbar">
    <button class="task" aria-label="Start"><svg viewBox="0 0 32 32"><path fill="#fff" d="M6 8.500 L14 7.200 V15.500 H6 Z M15 7 L26 5.500 V15.500 H15 Z M6 16.500 H14 V24.800 L6 23.500 Z M15 16.500 H26 V26 L15 24.800 Z"/></svg></button>
    <button class="task" aria-label="Search"><svg viewBox="0 0 32 32" fill="none" stroke="#fff" stroke-width="1.500"><circle cx="19" cy="12.500" r="6.500"/><path d="M14.500 17.500 L6 26"/></svg></button>
    <button class="task" aria-label="Task view"><svg viewBox="0 0 32 32" fill="none" stroke="#fff" stroke-width="1.300"><path d="M6.500 5 V8.500 H18.500 V5 M6.500 12 H18.500 V21 H6.500 Z M6.500 25 V23.500 H18.500 V25 M24.500 5 V9 M24.500 15 V25"/><path fill="#fff" d="M23.500 11 h2 v2 h-2 Z"/></svg></button>
    <button class="task edge" aria-label="Edge"><svg viewBox="0 0 32 32"><path fill="#0a78d7" d="M4 15 Q6 2 17 2 Q29 3 28 18 H12 Q13 24 19 24 Q23 24 27 22 V27 Q23 29.500 17 29 Q7 28 7 19 Q8 12 14 9 Q8 9 4 15 Z M12 13 H21 Q21 8 17 8 Q12 8 12 13 Z"/></svg></button>
    <button class="task open" aria-label="Paint"><svg viewBox="0 0 32 32"><path fill="#c4dff0" stroke="#7fa6c0" d="M16 7 Q28 7 28 17 Q27 28 16 28 Q12 28 12 24 Q11 21 7 24 Q2 24 3 18 Q5 9 16 7 Z"/><circle cx="8" cy="16" r="2.500" fill="#e03c31"/><circle cx="13" cy="12" r="2.500" fill="#4caf50"/><circle cx="19" cy="10.500" r="2.500" fill="#f6b73c"/><circle cx="15" cy="18" r="2" fill="#14212a"/><path d="M27 7 L19 29" stroke="#c87d3a" stroke-width="2.500"/><path fill="#d9b38c" d="M25 1 L32 4 L28 9 L25 8 Z"/></svg></button>
    <button class="task open files" aria-label="File Explorer"><svg viewBox="0 0 32 32"><path fill="#f7c948" d="M3 4 H14 L16 6 H29 V10 H3 Z"/><path fill="#ffe08a" d="M3 8 H30 V26 H3 Z"/><path fill="#3fb0dc" d="M8 15 H26 V26 H21 V20 H13 V26 H8 Z"/></svg></button>
    <button class="task opera" aria-label="Opera"><svg viewBox="0 0 32 32"><path fill="#ff1b2d" fill-rule="evenodd" d="M16 2 A14 14 0 1 0 16 30 A14 14 0 1 0 16 2 Z M17 5.500 C23 5.500 24 11 24 16 C24 21 23 26.500 17 26.500 C12 26.500 10 21 10 16 C10 11 12 5.500 17 5.500 Z"/><path fill="#ff6a6a" opacity=".6" d="M17 5.500 Q26 3 30 16 Q27 29 17 26.500 Q24 25 24 16 Q24 7 17 5.500 Z"/></svg></button>
    <button class="task active" aria-label="Mitsubishi ASA"><svg viewBox="0 0 32 32"><use href="#diamonds" x="5" y="4" width="22" height="20"/></svg></button>
    <div class="tray">
      <svg viewBox="0 0 24 24"><path d="M4 17 L12 9 L20 17" fill="none" stroke="#fff" stroke-width="1.500"/></svg>
      <svg viewBox="0 0 24 24"><path d="M7 9 H21 V18 H7 Z" fill="#fff"/><path d="M5 19.500 H22 V7.500 H9 M22.500 11 V16 M3 6 V9 H8 V6 M4.500 4 V6 M7 4 V6 M5.500 9 V14" fill="none" stroke="#fff" stroke-width="1.300"/></svg>
      <svg viewBox="0 0 24 24"><g fill="none" stroke="#fff" stroke-width="1.300"><path d="M4 20 Q4 6 20 5"/><path d="M8 20 Q8 10 20 9"/><path d="M12 20 Q12 14 20 13"/></g><circle cx="18" cy="18" r="2" fill="#fff"/></svg>
      <svg viewBox="0 0 24 24" fill="none" stroke="#fff" stroke-width="1.300"><path d="M2 10 H5 L10 5 V19 L5 15 H2 Z M13 9 Q15 12 13 15 M16 7 Q19 12 16 17"/><path stroke="#777" d="M19 5 Q23 12 19 19"/></svg>
      <span class="lang">ENG</span>
      <time class="clock">20:59<br>21.05.2019</time>
      <svg class="notice" viewBox="0 0 24 24"><path d="M2 3 H22 V19 H15 L12 22 L9 19 H2 Z" fill="none" stroke="#fff" stroke-width="1.500"/></svg>
    </div>
  </div>
</body>
</html>
```

FILE: styles.css
```css
* { box-sizing: border-box; }
body { margin: 0; min-height: 100vh; display: flex; flex-direction: column; background: #dcdcdc; color: #111; font-family: "Liberation Sans", Arial, sans-serif; font-size: 16px; }
button { font: inherit; color: inherit; padding: 0; border: 0; background: none; }
.sprites { position: absolute; }
.red { color: #f01818; }

/* title and menu */
.titlebar { display: flex; align-items: center; gap: 5px; height: 28px; padding: 0 3px; background: linear-gradient(90deg, #000 0, #7c0020 36%, #c8002e 62%, #ce0030 100%); border-bottom: 1px solid #d8a0ac; }
.title-logo { width: 28px; height: 26px; }
.titlebar h1 { flex: 1; margin: 0; color: #f0f0f0; font-size: 19px; font-weight: normal; line-height: 26px; }
.window-buttons { display: flex; gap: 1px; }
.window-buttons button { width: 19px; height: 22px; background: #f0f0f0; border: 1px solid #fff; border-right: 2px solid #777; border-bottom: 2px solid #777; display: flex; align-items: center; }
.window-buttons .close { margin-left: 3px; }
.menubar { display: flex; align-items: center; gap: 16px; height: 27px; padding: 0 8px 3px 9px; background: #f0f0f0; border-bottom: 1px solid #a0a0a0; font-family: "Open Sans", "Noto Sans", sans-serif; font-size: 15px; }
.menubar button { line-height: 22px; white-space: nowrap; }
.lexcom { width: 22px; height: 22px; margin: 3px 0 0 auto; padding-top: 5px; border: 1px solid #000; border-left: 0; border-bottom: 0; font: bold 10px/8px "Liberation Sans", sans-serif; }

/* toolbar */
.toolbar { display: flex; align-items: center; gap: 9px; height: 51px; padding: 0 0 2px 12px; background: #f0f0f0; border-top: 1px solid #fff; }
.toolbar button { width: 40px; height: 40px; background: #800000; }
.toolbar button:disabled { background: #808080; }
.toolbar svg { display: block; width: 40px; height: 40px; }
.toolbar .word { color: #fff; font: bold 16px "DejaVu Sans", sans-serif; }
.sep { width: 2px; height: 44px; margin: 0 -2px; background: #a8a8a8; border-right: 1px solid #fff; }
.help-mark { font: bold 34px Roboto, sans-serif; fill: #ffff60; stroke: #000; stroke-width: 1; text-anchor: middle; }

/* region and path */
.context { margin-right: 2px; border: 2px solid #707070; border-right-color: #808080; background: #e0ffff; }
.tabstrip { display: flex; justify-content: space-between; height: 26px; background: #dcdcdc; border-bottom: 1px solid #f4f4f4; font-family: Roboto, "Liberation Sans", sans-serif; font-size: 14px; }
.tab { width: 58px; padding-left: 2px; background: #e0ffff; border-right: 2px solid #555; color: #b00030; }
.region { position: relative; width: 472px; border: 2px solid #808080; border-bottom: 1px solid #f4f4f4; }
.region select { width: 100%; height: 100%; padding: 0 24px 0 3px; border: 0; border-radius: 0; background: #dcdcdc; color: #000; font: inherit; appearance: none; }
.region::after { content: "▼"; position: absolute; top: 0; right: 0; width: 20px; height: 21px; background: #f0f0f0; border: 1px solid #fff; border-right: 2px solid #777; border-bottom: 2px solid #777; font: 9px/18px "DejaVu Sans", sans-serif; text-align: center; pointer-events: none; }
.path { margin: 0; padding-left: 8px; height: 32px; line-height: 29px; color: #002020; }

/* workspace */
.workspace { flex: 1; display: flex; gap: 6px; margin: 6px 2px 0 0; }
.illustration { flex: 1; min-width: 0; display: flex; align-items: center; justify-content: center; background: #fff; border: 2px solid #707070; border-right: 1px solid #e8e8e8; border-bottom: 1px solid #e8e8e8; }
.drawing { width: 620px; height: 800px; flex: none; }
.side { width: 203px; display: flex; flex-direction: column; border-top: 2px solid #707070; border-left: 2px solid #707070; }
.grid-area { flex: 1; background: #fff; }
table { width: 100%; border-collapse: separate; border-spacing: 0; table-layout: fixed; font-size: 16px; }
th { height: 26px; padding: 0 7px; background: #f0f0f0; border-right: 2px solid #777; border-bottom: 2px solid #777; border-left: 1px solid #fff; font-weight: normal; text-align: left; }
th:last-child { border-right: 0; }
.no { width: 39px; }
.pnc { width: 113px; }
td { height: 26px; padding: 0 8px; border-right: 2px solid #c8c8c8; border-bottom: 1px solid #c0c0c0; }
td:last-child { border-right: 0; }
.current td { background: #ffb8b8; border-right-color: #e8a8a8; }
.current .edit { position: relative; padding: 0 0 0 4px; border: 0; }
.edit input { display: block; width: 100%; height: 26px; padding: 0 4px; border: 0; outline: 0; background: #fff; font: inherit; }
.caret { position: absolute; left: 9px; top: 1px; width: 1px; height: 19px; background: #000; }

.counters, .pager, .actions { font-family: Roboto, "Liberation Sans", sans-serif; }
.counters { display: grid; grid-template-columns: 1fr 1fr; padding: 0 8px 2px 0; margin-right: 0; text-align: center; line-height: 20px; }
.pager { display: flex; gap: 2px; height: 38px; margin-left: 1px; }
.pager button { flex: 1; }
.pager .second { margin-left: 7px; }
.pager button, .actions button { background: #dcdcdc; border: 2px solid #fff; border-right: 2px solid #666; border-bottom: 2px solid #666; }
.pager button:disabled { background: #f0f0f0; color: #888; }
.actions { display: grid; gap: 4px; margin: 4px 0 0 1px; }
.actions button { height: 31px; }

/* status bar */
.status { display: flex; gap: 3px; height: 36px; padding: 4px 0 8px; border-bottom: 1px solid #666; background: linear-gradient(#dcdcdc 28px, #b2b2b2 28px); font: 14px/20px "Open Sans", "Noto Sans", sans-serif; }
.status span { width: 120px; padding-left: 2px; border: 1px solid #a0a0a0; border-right-color: #fff; border-bottom-color: #fff; white-space: nowrap; }
.status .message { flex: 1; }
.status .progress { width: 194px; }

/* taskbar, tall items run up under the window edge */
.taskbar { display: flex; align-items: flex-end; gap: 10px; height: 40px; padding-left: 4px; overflow: hidden; background: linear-gradient(90deg, #14242d, #181a1a 42%, #0c1a22 75%, #0a171e); color: #fff; font-family: "Open Sans", "Noto Sans", sans-serif; font-size: 14px; }
.task { width: 51px; height: 50px; flex: none; padding-top: 4px; }
.task svg { width: 32px; height: 32px; }
.task.edge, .task.files { margin-left: 2px; }
.task.open { border-bottom: 3px solid #f7d9b4; }
.task.opera { margin-left: 2px; background: #931c22; border-bottom: 3px solid #f00000; }
.task.opera svg { width: 30px; height: 30px; }
.task.active { width: 61px; margin-left: -4px; background: #424e56; border-bottom: 3px solid #f7d9b4; }
.tray { display: flex; align-items: center; gap: 6px; height: 50px; margin-left: auto; padding-right: 29px; }
.tray svg { width: 24px; height: 24px; }
.lang { margin: 0 2px 0 6px; }
.clock { width: 86px; text-align: center; line-height: 22px; }
.tray .notice { margin-left: 8px; }

/* drawing: a core copy redraws the same hoses as a narrower white stroke */
.drawing path, .drawing ellipse, .drawing circle, .drawing rect { stroke-linejoin: round; }
.line, .lead { fill: none; stroke: #000; stroke-width: 5; }
.white { fill: #fff; }
.frame { stroke-width: 6; }
.thick { stroke-width: 8; }
.clamp { stroke-width: 28; }
.bolt { stroke-width: 15; }
.gleam { fill: none; stroke: #fff; stroke-width: 4; }
.core { --ink: #fff; --bore: 8; }
.hose, .core { fill: none; stroke: var(--ink, #000); stroke-width: var(--bore, 18); }
.pipe { fill: none; stroke: #000; stroke-width: 32; }
.pipe-core { fill: none; stroke: #fff; stroke-width: 21; }
.solid { fill: #000; stroke: #000; stroke-width: 2; }
.knock { fill: #fff; stroke: none; }
.dot { fill: #000; }
.line.full, .lead.full { stroke-width: 2; }
.core.full { --bore: 3; }
.hose.full { stroke-width: var(--bore, 7); }
.hot { fill: #ffb6b6; }
.selected { stroke: #103c40; stroke-width: 3; }
.callout { font: bold 19px "Liberation Sans", Arial, sans-serif; }
.callout.small { font-size: 14px; }
.sheet { font: bold 16px "Liberation Sans", Arial, sans-serif; }
.tip { fill: #ffffe1; stroke: #555; }
.tip-text { font: 14px "Open Sans", "Noto Sans", sans-serif; fill: #333; }
```
